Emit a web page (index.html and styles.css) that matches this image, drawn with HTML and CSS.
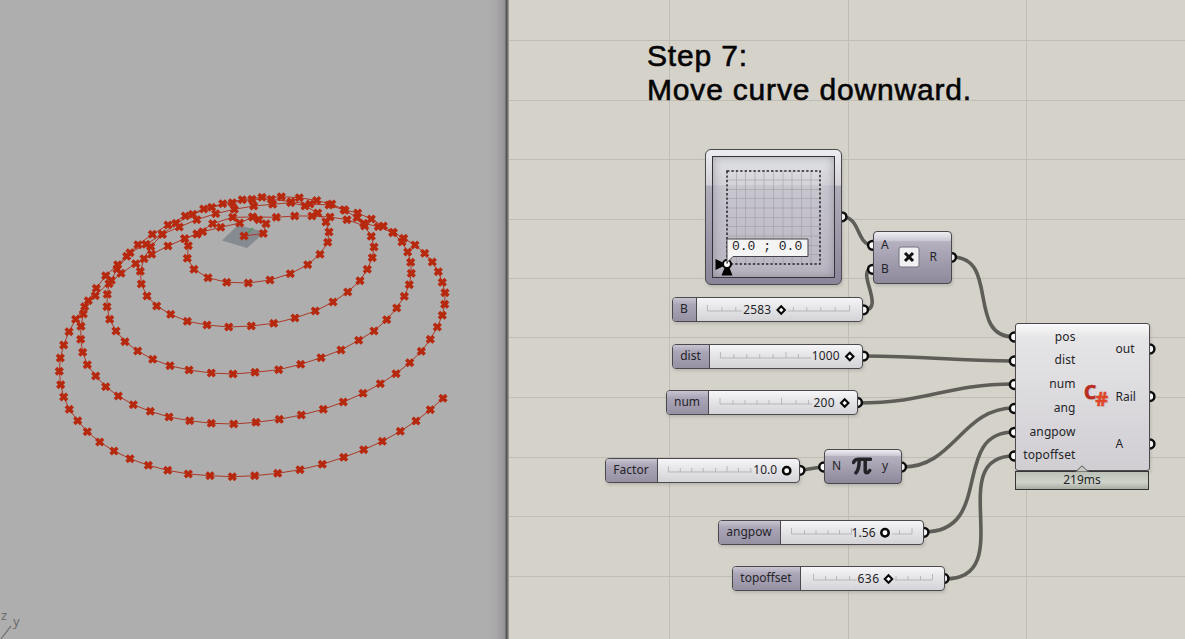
FILE: index.html
```html
<!DOCTYPE html>
<html lang="en">
<head>
<meta charset="utf-8">
<title>Spiral definition</title>
<link rel="stylesheet" href="styles.css">
</head>
<body>
<main class="workspace">
<section class="viewport">
<svg class="scene" viewBox="0 0 507 639">
  <defs>
    <marker id="cross" markerUnits="userSpaceOnUse" markerWidth="12" markerHeight="12" refX="6" refY="6" overflow="visible">
      <path class="mark" d="M2.600 2.800L9.400 9.200M9.400 2.800L2.600 9.200"/>
    </marker>
  </defs>
  <path class="plane" d="M222 240.500L238 225L265 232L247 248Z"/>
  <path class="axis-green" d="M244 236L253 228"/>
  <polyline class="curve" points="244,236 263.300,233.500 266,223.700 258.700,219.700 252.700,217 239.700,223 220.700,227.300 202.700,231.700 197,234 184.700,238.700 188.300,245.700 187.300,258.300 194,269.300 208,277.700 226.700,282.300 248.300,283 270,280 290.300,273.700 307.700,264.700 320,254.300 327.700,242.300 329,232 326,222 317.700,213 305,206 290.700,202.700 272.700,204.300 253.700,206 234.300,209.300 215.700,213.700 196.700,219.700 179.300,227 162.300,234.300 150.700,246.700 144,258.700 140.300,271.300 141.300,284 147,296 156.700,306 170.700,314.300 187.300,321.300 207,325 228.700,327 251.300,326 273.700,323.300 295,318 315.300,311 333,302 347.700,292 360,280.700 367.300,269.300 372.300,257.700 374,247 371.300,236.300 364.700,226 347,219.700 330,217 312,216 294.700,216 276.300,217.300 252.700,217 232.700,217.300 212.700,223.700 197,234 184.700,238.700 168,246 151.700,254.300 135.700,263.700 121,273.300 109,283.700 107.300,294.300 107,306.700 109.700,319.300 116,331 125,341.700 137.700,351 152.700,359.300 170,365.700 189,370 211.300,373 233,374 255,372.300 278.700,369.700 300.700,364.300 321,357.700 341,350 358.700,340.300 374,331 386.700,319.700 396.700,308 404.300,296.300 409.300,284.700 411.300,273.300 410.700,262.300 407.700,252 402,242 392.700,232.700 378.300,226.700 363.700,223.300 357,217.700 345,210.300 329,205 310,204 291,201.700 271.300,199.300 252,199.300 232.300,202.700 211.700,207.300 192.700,214.300 176,223.300 162.300,234.300 146,244.300 130,252.700 117,269 111.300,280.300 95.300,295.700 84.700,306.700 83.300,314 81,326.300 80.700,339.300 82.700,352.300 87.300,364.700 95.700,376 105.700,386.700 118.300,396 133.300,404.700 150.300,411.300 169,417 189.700,420.700 211.300,423.300 233.700,424 256,422.300 279.300,419.300 301.300,415 323.300,409.300 343.300,402 363,393.300 380.300,383.700 396,373.700 409.700,362.700 421.300,351.300 430.300,339.300 437.300,327 442.300,315.300 444.700,304.300 445,292.700 442.300,282.300 438.300,271.700 432.300,262 424.700,253.300 415,245 403.700,238.300 393.300,232.300 383.300,226 371.300,219 357.700,213 344,209.700 331.700,204 316.700,200.500 299.300,197.700 281.300,196.700 262,197.300 242.300,199.700 222.700,203.700 203.700,209 185.300,216 168,225 152.300,234.300 138,244.700 126.700,256.300 117.700,264.700 105.700,275.700 96.300,288.300 88.300,300.700 75.700,319.300 69,331.700 63.700,345 60.300,358 59.300,371.300 60.700,384.700 63.700,397 69.300,409.300 77.700,420.700 87.300,431.700 99.700,442 114,451 130,458.700 148.300,465.300 167.700,470.300 188.300,474 210,475.700 232.300,476.700 254.700,475.700 277.700,473.300 300,469.700 322.300,464.300 343.700,457.300 363.700,449.700 382.300,441.300 400.300,431.300 416,421 430.300,409.700 443,398.300"/>
  <path class="world-axis" d="M11 626L1 639"/>
  <text class="axis-name" x="1" y="619.500">z</text>
  <text class="axis-name" x="13" y="626">y</text>
</svg>
</section>
<section class="canvas">
<svg class="wires" viewBox="509 0 676 639">
  <path class="grid" d="M509 40.500H1185M509 100.500H1185M509 159.500H1185M509 219.500H1185M509 278.500H1185M509 337.500H1185M509 397.500H1185M509 457.500H1185M509 516.500H1185M509 576.500H1185M669.500 0V639M848.500 0V639M1026.500 0V639"/>
  <g class="wire">
    <path d="M843 217C860 217 857 245 872 245"/>
    <path d="M864 310C886 310 855 269 872 269"/>
    <path d="M952 257C1000 257 966 337 1014 337"/>
    <path d="M864 356C930 356 950 361 1014 361"/>
    <path d="M858 403C930 403 945 384 1014 384"/>
    <path d="M801 470C810 470 814 467 824 467"/>
    <path d="M903 467C954 467 962 408 1014 408"/>
    <path d="M924 532C995 532 950 432 1014 432"/>
    <path d="M945 579C1020 579 942 456 1014 456"/>
  </g>
  <g class="port">
    <circle cx="842" cy="216.800" r="4.400"/><circle cx="872.500" cy="245.300" r="4.400"/><circle cx="872.500" cy="269.300" r="4.400"/><circle cx="951.500" cy="257.300" r="4.400"/>
    <circle cx="863.500" cy="309.800" r="4.400"/><circle cx="863.500" cy="356.100" r="4.400"/><circle cx="857.500" cy="402.500" r="4.400"/><circle cx="800" cy="470.300" r="4.400"/>
    <circle cx="823.700" cy="467" r="4.400"/><circle cx="901.500" cy="467" r="4.400"/><circle cx="924" cy="532.300" r="4.400"/><circle cx="944" cy="578.500" r="4.400"/>
    <circle cx="1014.300" cy="337" r="4.400"/><circle cx="1014.300" cy="361" r="4.400"/><circle cx="1014.300" cy="384.500" r="4.400"/><circle cx="1014.300" cy="408.500" r="4.400"/><circle cx="1014.300" cy="432.300" r="4.400"/><circle cx="1014.300" cy="456" r="4.400"/>
    <circle cx="1150" cy="349" r="4.400"/><circle cx="1150" cy="396.500" r="4.400"/><circle cx="1150" cy="444" r="4.400"/>
  </g>
</svg>

<h1 class="caption">Step 7:<br>Move curve downward.</h1>

<div class="node md-slider">
  <div class="md-frame">
    <svg class="md-grid" viewBox="712 155.500 123 122">
      <path class="mesh" d="M736.500 170V263M745.500 170V263M755 170V263M764 170V263M773.500 170V263M783 170V263M792 170V263M801.500 170V263M811 170V263M727 179.500H820M727 189H820M727 198H820M727 207.500H820M727 217H820M727 226H820M727 235.500H820M727 245H820M727 254H820"/>
      <rect class="dots" x="727" y="170.500" width="93" height="93"/>
      <path d="M715.500 258.500L727 264L715.500 269.500ZM727 261L721.500 275H732.500Z"/>
      <circle class="knob" cx="727" cy="263.500" r="4"/>
      <path class="tip" d="M727 238.500H808V256H733L728 261L727 263Z"/>
      <text class="coords" x="732" y="249.500">0.0 ; 0.0</text>
    </svg>
  </div>
</div>

<div class="node purple multiply">
  <div class="stack"><span>A</span><span>B</span></div>
  <svg class="times" viewBox="0 0 22 22"><rect x="1" y="1" width="20" height="20" rx="2"/><path d="M7 7L15 15M15 7L7 15"/></svg>
  <span>R</span>
</div>

<div class="node slider s-b"><div class="name">B</div>
  <svg class="track" viewBox="697 0 166 23"><path class="ticks" d="M707.500 7V13H742M788 13H850.500V7M722 9V13M736 9V13M794 9V13M807.500 9V13M821.500 9V13M836 9V13"/><text x="743.500" y="16" textLength="28">2583</text><path class="knob" d="M778 12L781.700 8.300L785.400 12L781.700 15.700Z"/></svg></div>
<div class="node slider s-dist"><div class="name">dist</div>
  <svg class="track" viewBox="710 0 153 23"><path class="ticks" d="M720.500 7V13H812M734 9V13M747 9V13M760 9V13M773.500 9V13M786.500 7V13M799 9V13"/><text x="812.500" y="15.500" textLength="28">1000</text><path class="knob" d="M847 11.500L850.700 7.800L854.400 11.500L850.700 15.200Z"/></svg></div>
<div class="node slider s-num"><div class="name">num</div>
  <svg class="track" viewBox="709 0 148 23"><path class="ticks" d="M720 7V13H812M733 9V13M745 9V13M757 9V13M769 9V13M781.500 7V13M796 9V13M808.500 9V13"/><text x="813.500" y="15.500" textLength="21">200</text><path class="knob" d="M841 12L844.700 8.300L848.400 12L844.700 15.700Z"/></svg></div>
<div class="node slider s-factor"><div class="name">Factor</div>
  <svg class="track" viewBox="658 0 142 23"><path class="ticks" d="M668.500 7V13H753M680.500 9V13M692 9V13M703.500 9V13M716 9V13M727.500 7V13M739 9V13M751.500 9V13"/><text x="754" y="15.500" textLength="24">10.0</text><circle class="knob round" cx="787.600" cy="11.700" r="3.700"/></svg></div>
<div class="node slider s-angpow"><div class="name">angpow</div>
  <svg class="track" viewBox="781 0 142 23"><path class="ticks" d="M791.500 7V13H851.500V7M804.500 9V13M816 9V13M828 9V13M839.500 9V13M892 13H912V7M899.500 9V13"/><text x="851.500" y="15.500" textLength="24">1.56</text><circle class="knob round" cx="885" cy="11.700" r="3.700"/></svg></div>
<div class="node slider s-topoffset"><div class="name">topoffset</div>
  <svg class="track" viewBox="801 0 142 23"><path class="ticks" d="M813 7V13H856M894 13H932V7M825 9V13M836 9V13M849 9V13M895.500 9V13M907.500 9V13M920 9V13"/><text x="857" y="16" textLength="21.500">636</text><path class="knob" d="M884.300 12L888 8.300L891.700 12L888 15.700Z"/></svg></div>

<div class="node purple pi">
  <span>N</span>
  <svg class="pi-icon" viewBox="0 0 20 20"><path d="M1.500 6.500C3 3.500 4 3.200 7 3.200H18.500M7.200 4C7.200 10 6.700 14 4 16.800M13.200 4V14.500C13.200 17.500 16 17.500 17.700 14.500"/></svg>
  <span>y</span>
</div>

<div class="node script">
  <div class="inputs"><span>pos</span><span>dist</span><span>num</span><span>ang</span><span>angpow</span><span>topoffset</span></div>
  <div class="csharp"><b>C</b><i>#</i></div>
  <div class="outputs"><span>out</span><span>Rail</span><span>A</span></div>
</div>
<div class="timer">219ms<svg class="notch" viewBox="0 0 14 7"><path d="M0 6.500H1L7 .8L13 6.500H14"/></svg></div>
</section>
</main>
</body>
</html>
```
FILE: styles.css
```css
* { box-sizing: border-box; }
body { margin: 0; overflow: hidden; font: 12px/16px "Noto Sans", sans-serif; color: #242428; }
.workspace { display: flex; width: 1185px; height: 639px; }
.viewport {
  width: 509px;
  border-right: 1px solid #96958f;
  background: linear-gradient(90deg, #aeaeae 0 488px, #aaa8aa 496px, #949294 505px, #555 506px 507px, #898883 508px);
}
svg { display: block; }
.scene { width: 507px; height: 639px; }
.curve { fill: none; stroke: #ad3826; stroke-width: 1; marker-start: url(#cross); marker-mid: url(#cross); marker-end: url(#cross); }
.mark { fill: none; stroke: #b7290f; stroke-width: 3.6; }
.plane { fill: #858b91; }
.axis-green { stroke: #4a9a5a; stroke-width: 1.5; }
.world-axis { stroke: #777; stroke-width: 1.3; }
.axis-name { font: 13px "Noto Sans", sans-serif; fill: #6c6c6c; }

.canvas { position: relative; flex: 1; background: #d5d2ca; }
.wires { width: 676px; height: 639px; }
.grid { stroke: #bfbdb4; fill: none; }
.wire { fill: none; stroke: #5e5d58; stroke-width: 3.6; }
.port { fill: #fff; stroke: #0b0b0b; stroke-width: 2.5; }
.caption {
  position: absolute; left: 138px; top: 39px; margin: 0;
  font: 400 30px/33.5px "Liberation Sans", Arial, sans-serif;
  letter-spacing: .82px; color: #050505; white-space: nowrap; -webkit-text-stroke: .6px #050505;
}

.node { position: absolute; border: 1.5px solid #4b494d; border-radius: 4px; box-shadow: 1px 2px 3px #5553; }
.md-slider {
  left: 196px; top: 149px; width: 137px; height: 136px; padding: 6px; border-radius: 6px;
  background: linear-gradient(#ededf0, #d3d1d7 26%, #b1aebb 27%, #8b8599);
}
.md-frame {
  height: 100%; border: 1.5px solid #36343a;
  background: linear-gradient(#e2e3e5, #d3d3d8 23%, #c8c6cf 24%, #b9b5c1);
  box-shadow: inset 0 0 10px #66637180;
}
.md-grid { width: 123px; height: 122px; margin: -1px; overflow: visible; }
.mesh { stroke: #9997a0; stroke-width: .8; opacity: .65; }
.dots { fill: none; stroke: #25242a; stroke-width: 1.5; stroke-dasharray: 2.4 2; }
.tip { fill: #f5f4f5; stroke: #444248; }
.coords { font: 13px "Liberation Mono", monospace; fill: #222; }
.knob { fill: #fff; stroke: #080808; stroke-width: 2.1; }
.round { stroke-width: 2.5; }

.purple { display: flex; align-items: center; justify-content: space-between; background: linear-gradient(#efeff2, #cbc8d3 17%, #b5b1bf 19%, #8e889b); }
.multiply { left: 364px; top: 231px; width: 79px; height: 53px; padding: 0 14px 2px 7px; }
.stack { display: flex; flex-direction: column; gap: 8px; }
.stack span { line-height: 16px; }
.times { width: 22px; height: 22px; }
.times rect { fill: #f1f0f2; stroke: #75707f; }
.times path { stroke: #111; stroke-width: 3; }
.pi { left: 315px; top: 449px; width: 78px; height: 35px; padding: 0 13px 1px 7px; }
.pi-icon { width: 20px; height: 20px; }
.pi-icon path { fill: none; stroke: #242328; stroke-width: 3.5; stroke-linecap: round; }

.slider { display: flex; height: 25px; overflow: hidden; background: linear-gradient(#f6f5f7, #e4e3e6 48%, #d4d3d7); }
.name { padding-bottom: 1px; border-right: 1.5px solid #4b494d; background: linear-gradient(#c8c4d1, #aba6b7 30%, #9690a3); text-align: center; line-height: 21px; }
.name { padding-right: 1px; }
.track { flex: 1; height: 23px; min-width: 0; }
.track text { font: 12px "Noto Sans", sans-serif; fill: #242428; }
.ticks { fill: none; stroke: #b3b2b3; stroke-width: .9; }
.s-b { left: 163px; top: 297px; width: 191px; }
.s-b .name { width: 24px; }
.s-dist { left: 163px; top: 344px; width: 191px; }
.s-dist .name { width: 37px; }
.s-num { left: 157px; top: 390px; width: 192px; }
.s-num .name { width: 42px; }
.s-factor { left: 96px; top: 458px; width: 195px; }
.s-factor .name { width: 52px; }
.s-angpow { left: 209px; top: 520px; width: 206px; }
.s-angpow .name { width: 62px; }
.s-topoffset { left: 223px; top: 566px; width: 213px; }
.s-topoffset .name { width: 68px; }

.script {
  left: 506px; top: 323px; width: 135px; height: 148px;
  display: flex; border-radius: 3px;
  background: linear-gradient(#fafafa, #e5e4e6 10%, #d0ced3);
}
.inputs { width: 59.5px; padding-top: .5px; text-align: right; }
.inputs span { display: block; height: 23.8px; line-height: 23px; letter-spacing: .1px; white-space: nowrap; }
.csharp { display: flex; width: 40px; padding: 58px 0 0 8.5px; font-family: "Noto Sans", sans-serif; line-height: 22px; text-shadow: 1px 1px 1px #8885; }
.csharp b { font-size: 19px; color: #b92d22; -webkit-text-stroke: .7px #b92d22; margin-top: -1px; }
.csharp i { margin: 6px 0 0 -1px; font-size: 20px; font-weight: 700; font-style: normal; color: #df4527; -webkit-text-stroke: .5px #df4527; }
.outputs { padding-top: 13px; }
.outputs span { display: block; height: 47.5px; line-height: 24px; }
.timer {
  position: absolute; left: 506px; top: 471px; width: 134px; height: 19px;
  border: 1.5px solid #343532; background: linear-gradient(#bcc0b6, #d0d3c9 60%, #a9ada3);
  text-align: center; line-height: 16px;
}
.notch { position: absolute; left: 59px; top: -7px; width: 14px; height: 7px; }
.notch path { fill: #c5c8bf; stroke: #555; }
```
